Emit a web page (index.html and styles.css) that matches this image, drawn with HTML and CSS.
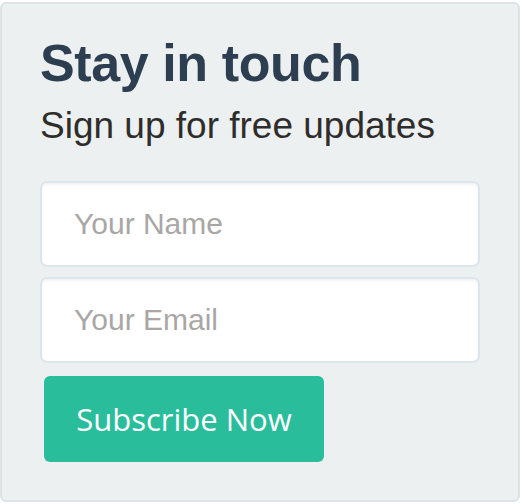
FILE: index.html
```html
<!DOCTYPE html>
<html>
<head>
<meta charset="utf-8">
<link rel="stylesheet" href="styles.css">
</head>
<body>
<div class="card">
  <h1 class="title">Stay in touch</h1>
  <p class="subtitle">Sign up for free updates</p>
  <form class="form">
    <input class="field" type="text" placeholder="Your Name">
    <input class="field" type="email" placeholder="Your Email">
    <button class="btn" type="button">Subscribe Now</button>
  </form>
</div>
</body>
</html>
```
FILE: styles.css
```css
html, body {
  margin: 0;
  padding: 0;
  background: #ffffff;
}
.card {
  box-sizing: border-box;
  margin-top: 2px;
  width: 520px;
  height: 500px;
  background: #ecf0f1;
  border: 2px solid #dde3e6;
  border-radius: 6px;
  padding: 33px 38px 0 38px;
  font-family: "Liberation Sans", Arial, sans-serif;
}
.title {
  margin: 0;
  font-size: 52px;
  line-height: 52px;
  font-weight: bold;
  color: #2c3e50;
  letter-spacing: -0.4px;
}
.subtitle {
  margin: 18px 0 0 0;
  font-size: 37px;
  line-height: 37px;
  color: #2f2d2c;
}
.form {
  display: flex;
  flex-direction: column;
  align-items: flex-start;
  margin-top: 37px;
}
.field {
  box-sizing: border-box;
  width: 440px;
  height: 86px;
  margin: 0 0 10px 0;
  padding: 0 32px;
  border: 2px solid #dde5ec;
  border-radius: 7px;
  background: #ffffff;
  box-shadow: inset 0 2px 3px rgba(0, 0, 0, 0.05);
  font-family: "Liberation Sans", Arial, sans-serif;
  font-size: 30px;
  color: #333;
  outline: none;
}
.field::placeholder {
  color: #a9a6a5;
}
.btn {
  margin: 3px 0 0 4px;
  width: 280px;
  height: 86px;
  border: none;
  border-radius: 6px;
  background: #2abd9b;
  color: #ffffff;
  font-family: "Open Sans", sans-serif;
  font-size: 31px;
  padding: 0;
  cursor: pointer;
}
```
